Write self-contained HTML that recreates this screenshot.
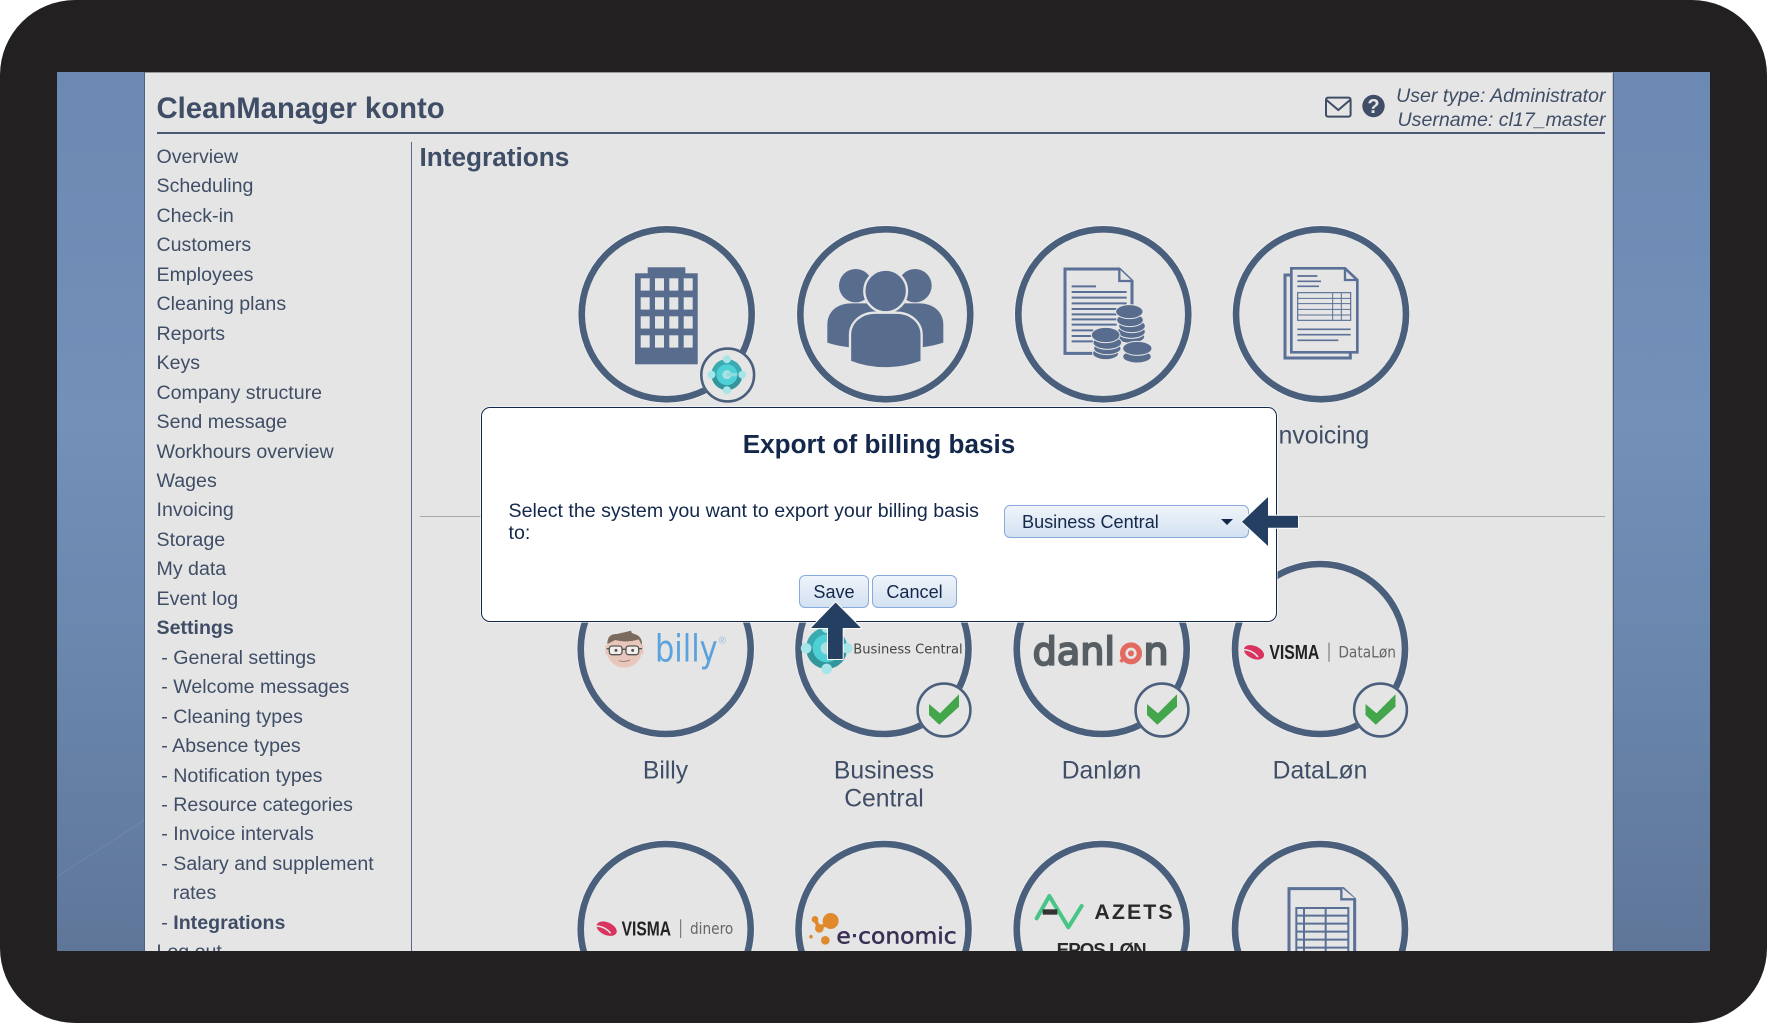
<!DOCTYPE html>
<html lang="en">
<head>
<meta charset="utf-8">
<title>CleanManager konto</title>
<style>
html,body{margin:0;padding:0;width:1767px;height:1023px;overflow:hidden;background:#fff}
body{font-family:"Liberation Sans",Arial,sans-serif;position:relative}
#frame{position:absolute;left:0;top:0;width:1767px;height:1023px;background:#222021;border-radius:75px}
#screen{position:absolute;left:57px;top:72px;width:1653px;height:879px;overflow:hidden;background:linear-gradient(180deg,#6c89b3 0%,#7290b8 40%,#6a87ae 65%,#5f7699 100%)}
#in{position:absolute;left:-57px;top:-72px;width:1767px;height:1023px;filter:blur(.3px)}
#panel{position:absolute;left:144px;top:72px;width:1470px;height:900px;background:#e5e5e5;border-left:1.2px solid #4c6180;border-right:1.2px solid #4c6180;box-sizing:border-box;box-shadow:inset -1px 0 0 #c4c4c4,inset 0 1px 0 #9a9a9a}
.abs{position:absolute;white-space:nowrap}
#title{left:156.5px;top:91.5px;font-size:29.3px;line-height:33px;font-weight:bold;color:#3f4e66}
#rule{left:156.5px;top:132px;width:1448.5px;height:1.6px;background:#4a5a74}
#vr{left:410.8px;top:142px;width:1.6px;height:830px;background:#56698a}
#h2{left:419.5px;top:141.5px;font-size:26.2px;line-height:30px;font-weight:bold;color:#3f4e66}
#user{left:1200px;width:405.5px;top:83.5px;text-align:right;font-size:19.6px;line-height:24.4px;font-style:italic;color:#3f4e66}
#nav{left:156.5px;top:143px;width:250px;font-size:19.6px;line-height:29.45px;color:#3f4e66}
#nav div{white-space:nowrap}
#nav .s{padding-left:4.8px}
#nav .i{padding-left:16.2px}
#nav b{font-weight:bold}
#hr2{left:419.5px;top:516px;width:1185.5px;height:1.4px;background:#a9a9a9}
svg{position:absolute;left:0;top:0;overflow:visible}
#modal{position:absolute;left:481px;top:406.5px;width:796px;height:215.5px;box-sizing:border-box;background:#fff;border:1.6px solid #14284b;border-radius:9px;box-shadow:0 0 0 1px rgba(255,255,255,.55);color:#14284b}
#mt{position:absolute;left:0;right:0;top:21.8px;text-align:center;font-size:26.1px;line-height:30px;font-weight:bold}
#mb{position:absolute;left:26.5px;top:92px;width:480px;font-size:19.6px;line-height:22.4px}
#sel{position:absolute;left:521.5px;top:97px;width:245px;height:33.6px;box-sizing:border-box;border:1.3px solid #86abdc;border-radius:6px;background:linear-gradient(180deg,#eff4fa,#d3e1f1);font-size:18.1px;line-height:33px;padding-left:17.5px}
#car{position:absolute;left:216px;top:13px;width:0;height:0;border-left:6px solid transparent;border-right:6px solid transparent;border-top:6.5px solid #14284b}
.btn{position:absolute;top:167px;height:33.6px;box-sizing:border-box;border:1.3px solid #86abdc;border-radius:6px;background:linear-gradient(180deg,#eff4fa,#d3e1f1);font-size:18.1px;line-height:33px;text-align:center}
</style>
</head>
<body>
<div id="frame">
<div id="screen">
<div id="in">
<svg width="1767" height="1023" viewBox="0 0 1767 1023">
  <line x1="57" y1="877" x2="144" y2="820" stroke="#fff" stroke-opacity=".07" stroke-width="1.2"/>
</svg>
<div id="panel"></div>
<div class="abs" id="title">CleanManager konto</div>
<div class="abs" id="rule"></div>
<div class="abs" id="vr"></div>
<div class="abs" id="h2">Integrations</div>
<div class="abs" id="user">User type: Administrator<br>Username: cl17_master</div>
<div class="abs" id="nav">
<div>Overview</div><div>Scheduling</div><div>Check-in</div><div>Customers</div><div>Employees</div><div>Cleaning plans</div><div>Reports</div><div>Keys</div><div>Company structure</div><div>Send message</div><div>Workhours overview</div><div>Wages</div><div>Invoicing</div><div>Storage</div><div>My data</div><div>Event log</div><div><b>Settings</b></div>
<div class="s">- General settings</div><div class="s">- Welcome messages</div><div class="s">- Cleaning types</div><div class="s">- Absence types</div><div class="s">- Notification types</div><div class="s">- Resource categories</div><div class="s">- Invoice intervals</div><div class="s">- Salary and supplement</div><div class="i">rates</div><div class="s">- <b>Integrations</b></div><div>Log out</div>
</div>
<div class="abs" id="hr2"></div>

<svg width="1767" height="1023" viewBox="0 0 1767 1023">
<defs>
  <g id="ring"><circle r="85" fill="none" stroke="#fff" stroke-opacity=".55" stroke-width="8"/><circle r="85" fill="#e5e5e5" stroke="#4a5f7c" stroke-width="6.6"/></g>
  <g id="chk"><circle r="27.8" fill="#fff" opacity=".6"/><circle r="26.4" fill="#e5e5e5" stroke="#4a5f7c" stroke-width="2.6"/><polygon points="-15,-6 -4,3.3 15,-15.7 15,-3.3 -4.7,14.7 -15,5" fill="#44a64b"/></g>
  <g id="bc">
    <circle r="15.5" fill="#34969d"/>
    <path d="M-15.5 0A15.5 15.5 0 0 1 15.5 0Z" fill="#3aabb0"/>
    <circle r="10.5" fill="#4fcfd6"/>
    <circle r="4.6" fill="#a9e0e2"/>
    <rect x="0" y="-1.6" width="10" height="3.2" fill="#8fdcdf"/>
    <circle cx="0" cy="-15.5" r="4" fill="#a6e6e8"/><circle cx="0" cy="15.5" r="4" fill="#a6e6e8"/><circle cx="-15.5" cy="0" r="4" fill="#a6e6e8"/><circle cx="15.5" cy="0" r="4" fill="#a6e6e8"/>
  </g>
  <g id="swoosh">
    <ellipse rx="32" ry="19" transform="rotate(24)" fill="#d9345f"/>
    <path d="M-30 -8Q-4 -6 12 14" fill="none" stroke="#e5e5e5" stroke-width="4.5"/>
  </g>
</defs>

<!-- row 1 -->
<use href="#ring" x="666.7" y="314.3"/>
<use href="#ring" x="885.3" y="314.3"/>
<use href="#ring" x="1103.3" y="314.3"/>
<use href="#ring" x="1321" y="314.3"/>

<!-- building -->
<g fill="#586c8d">
  <rect x="635" y="273.3" width="62.7" height="91"/>
  <rect x="647.7" y="267.3" width="37.6" height="7"/>
</g>
<g fill="#e5e5e5">
  <rect x="640.7" y="278.3" width="9" height="12.3"/><rect x="655" y="278.3" width="9" height="12.3"/><rect x="669.3" y="278.3" width="9" height="12.3"/><rect x="683.7" y="278.3" width="9" height="12.3"/>
  <rect x="640.7" y="297.3" width="9" height="12.3"/><rect x="655" y="297.3" width="9" height="12.3"/><rect x="669.3" y="297.3" width="9" height="12.3"/><rect x="683.7" y="297.3" width="9" height="12.3"/>
  <rect x="640.7" y="316.3" width="9" height="12.3"/><rect x="655" y="316.3" width="9" height="12.3"/><rect x="669.3" y="316.3" width="9" height="12.3"/><rect x="683.7" y="316.3" width="9" height="12.3"/>
  <rect x="640.7" y="335.3" width="9" height="12.3"/><rect x="655" y="335.3" width="9" height="12.3"/><rect x="669.3" y="335.3" width="9" height="12.3"/><rect x="683.7" y="335.3" width="9" height="12.3"/>
</g>
<circle cx="727.7" cy="375" r="27.8" fill="#fff" opacity=".6"/>
<circle cx="727.7" cy="375" r="26.4" fill="#e5e5e5" stroke="#4a5f7c" stroke-width="2.6"/>
<use href="#bc" x="726.9" y="374.7"/>

<!-- people -->
<g transform="translate(560 220) scale(.33333)">
  <circle cx="887" cy="197" r="50" fill="#586c8d"/>
  <circle cx="1065" cy="197" r="50" fill="#586c8d"/>
  <path d="M802 368V315C802 275 830 250 875 250H1078C1120 250 1150 275 1150 315V368Q1120 378 1085 382H870Q830 378 802 368Z" fill="#586c8d"/>
  <path d="M870 425V345C870 305 905 278 945 278H1010C1050 278 1085 305 1085 345V425Q1030 445 977 445Q920 445 870 425Z" fill="#586c8d" stroke="#e5e5e5" stroke-width="7"/>
  <circle cx="977" cy="213" r="64" fill="#586c8d" stroke="#e5e5e5" stroke-width="7"/>
</g>

<!-- document with coins -->
<g transform="translate(1000 220) scale(.33333)">
  <path d="M280 400H195V147H358L396 183V260" fill="none" stroke="#5a7096" stroke-width="9"/>
  <path d="M358 147V183H396" fill="#e5e5e5" stroke="#5a7096" stroke-width="7"/>
  <g stroke="#5a7096" stroke-width="6" fill="none">
    <path d="M215 199H288M215 216H380M215 233H380M215 250H380M215 267H350M215 283H350M215 298H350M215 314H350M215 331H280M215 348H280M215 364H280"/>
  </g>
  <g fill="#586c8d" stroke="#e5e5e5" stroke-width="3">
    <ellipse cx="392" cy="350" rx="42" ry="20"/><ellipse cx="394" cy="335" rx="42" ry="20"/><ellipse cx="396" cy="318" rx="40" ry="20"/><ellipse cx="390" cy="300" rx="40" ry="20"/>
    <ellipse cx="388" cy="275" rx="41" ry="21"/>
    <ellipse cx="317" cy="400" rx="39" ry="19"/><ellipse cx="322" cy="385" rx="41" ry="19"/><ellipse cx="322" cy="368" rx="43" ry="20"/>
    <ellipse cx="317" cy="345" rx="43" ry="23"/>
    <ellipse cx="411" cy="410" rx="43" ry="19"/><ellipse cx="412" cy="385" rx="44" ry="21"/>
  </g>
</g>

<!-- invoice -->
<g transform="translate(1000 220) scale(.33333)" fill="none" stroke="#5a7096">
  <path d="M870 165H855V414H1051V398" stroke-width="9"/>
  <path d="M874 145H1035L1072 180V397H874Z" stroke-width="8" fill="#e5e5e5"/>
  <path d="M1035 145V180H1072" stroke-width="7"/>
  <path d="M892 168H952M892 184H963M892 199H957" stroke-width="5"/>
  <rect x="893" y="218" width="159" height="83" stroke-width="3.5"/>
  <path d="M893 235H1052M893 251H1052M893 268H1052M893 285H1052M998 218V301M1024 218V301" stroke-width="3"/>
  <path d="M892 328H1052M892 344H1052M892 361H1015" stroke-width="5"/>
</g>

<text x="1320.5" y="443.6" text-anchor="middle" font-size="24.7" fill="#3f4e66" font-family="Liberation Sans">Invoicing</text>

<!-- row 2 -->
<use href="#ring" x="665.7" y="649"/>
<use href="#ring" x="883.5" y="649"/>
<use href="#ring" x="1101.7" y="649"/>
<use href="#ring" x="1320" y="649"/>

<!-- billy -->
<g transform="translate(560 600) scale(.33333)">
  <circle cx="193" cy="150" r="53" fill="#e9c6bb"/>
  <rect x="136" y="135" width="8" height="28" rx="4" fill="#e9c6bb"/><rect x="242" y="135" width="8" height="28" rx="4" fill="#e9c6bb"/>
  <path d="M142 132Q142 100 172 102L214 92Q212 100 224 102Q248 110 246 136L236 118Q200 130 166 120Z" fill="#7b6b5f"/>
  <g fill="#f3efe9" stroke="#555" stroke-width="4"><rect x="148" y="138" width="38" height="26" rx="8"/><rect x="198" y="138" width="38" height="26" rx="8"/></g>
  <path d="M186 148H198M140 146H148M236 146H246" stroke="#555" stroke-width="4"/>
  <circle cx="168" cy="151" r="4.5" fill="#555"/><circle cx="218" cy="151" r="4.5" fill="#555"/>
  <path d="M176 182Q193 188 210 180" fill="none" stroke="#9e7f74" stroke-width="3"/>
  <text x="285" y="185" font-family="DejaVu Sans" font-size="112" fill="#5aa2dd" textLength="188" lengthAdjust="spacingAndGlyphs">billy</text>
  <text x="476" y="130" font-family="Liberation Sans" font-size="30" fill="#8fbfe6">®</text>
</g>

<!-- business central -->
<g transform="translate(826.7 648.3) scale(1.33)"><use href="#bc"/></g>
<text x="853.3" y="653.3" font-family="DejaVu Sans" font-size="13.2" fill="#444" textLength="109.4" lengthAdjust="spacingAndGlyphs">Business Central</text>

<!-- danlon -->
<g transform="translate(1000 600) scale(.33333)">
  <text x="98" y="193" font-family="DejaVu Sans" font-size="115" fill="#575e63" stroke="#575e63" stroke-width="6" textLength="247" lengthAdjust="spacingAndGlyphs">danl</text>
  <circle cx="393" cy="160" r="25" fill="none" stroke="#e26a60" stroke-width="16"/>
  <circle cx="393" cy="160" r="9" fill="#e26a60"/>
  <path d="M362 186L372 172" stroke="#e26a60" stroke-width="10"/>
  <text x="430" y="193" font-family="DejaVu Sans" font-size="115" fill="#575e63" stroke="#575e63" stroke-width="6" textLength="76" lengthAdjust="spacingAndGlyphs">n</text>
</g>

<!-- visma datalon -->
<g transform="translate(1000 600) scale(.33333)">
  <use href="#swoosh" x="762" y="157"/>
  <text x="808" y="177" font-family="Liberation Sans" font-weight="bold" font-size="62" fill="#222" textLength="150" lengthAdjust="spacingAndGlyphs">VISMA</text>
  <path d="M987 128V185" stroke="#666" stroke-width="3"/>
  <text x="1015" y="173" font-family="DejaVu Sans" font-size="48" fill="#666" textLength="173" lengthAdjust="spacingAndGlyphs">DataLøn</text>
</g>

<use href="#chk" x="944" y="710"/>
<use href="#chk" x="1162" y="710"/>
<use href="#chk" x="1380.5" y="710"/>

<g font-family="Liberation Sans" font-size="24.7" fill="#3f4e66" text-anchor="middle">
  <text x="665.5" y="778.3">Billy</text>
  <text x="884" y="778.3">Business</text>
  <text x="884" y="806.5">Central</text>
  <text x="1101.5" y="778.3">Danløn</text>
  <text x="1320" y="778.3">DataLøn</text>
</g>

<!-- row 3 -->
<use href="#ring" x="665.7" y="929"/>
<use href="#ring" x="883.5" y="929"/>
<use href="#ring" x="1101.7" y="929"/>
<use href="#ring" x="1320" y="929"/>

<g transform="translate(560 820) scale(.33333)">
  <use href="#swoosh" x="140" y="326"/>
  <text x="185" y="346" font-family="Liberation Sans" font-weight="bold" font-size="62" fill="#222" textLength="148" lengthAdjust="spacingAndGlyphs">VISMA</text>
  <path d="M362 298V354" stroke="#666" stroke-width="3"/>
  <text x="390" y="342" font-family="DejaVu Sans" font-size="48" fill="#666" textLength="130" lengthAdjust="spacingAndGlyphs">dinero</text>
  <g fill="#e08a2e">
    <circle cx="765" cy="298" r="10"/><circle cx="812" cy="303" r="24"/><circle cx="778" cy="325" r="13"/><circle cx="796" cy="361" r="13"/><circle cx="753" cy="350" r="5.5"/>
    <path d="M765 298L778 325L812 303" fill="none" stroke="#e08a2e" stroke-width="11"/>
  </g>
  <text x="829" y="370" font-family="DejaVu Sans" font-size="66" fill="#3a2f55" stroke="#3a2f55" stroke-width="1.6" textLength="361" lengthAdjust="spacingAndGlyphs">e·conomic</text>
</g>

<g transform="translate(1000 820) scale(.33333)">
  <path d="M110 295L148 228L205 322L245 258" fill="none" stroke="#47c585" stroke-width="12" stroke-linejoin="round" stroke-linecap="round"/>
  <rect x="128" y="268" width="44" height="16" fill="#333"/>
  <text x="283" y="297" font-family="Liberation Sans" font-weight="bold" font-size="64" fill="#2a2a2a" textLength="235">AZETS</text>
  <text x="170" y="408" font-family="Liberation Sans" font-weight="bold" font-size="56" fill="#2a2a2a" textLength="270">EPOS LØN</text>
  <path d="M867 700V206H1030L1064 238V700" fill="none" stroke="#5a7096" stroke-width="9"/>
  <path d="M1024 202V238H1068" fill="#e5e5e5" stroke="#5a7096" stroke-width="7"/>
  <path d="M889 700V264H1045V700M889 287H1045M889 311H1045M889 335H1045M889 359H1045M889 383H1045M889 407H1045M912 264V700M977 264V700" fill="none" stroke="#5a7096" stroke-width="6"/>
</g>
</svg>

<div id="modal">
  <div id="mt">Export of billing basis</div>
  <div id="mb">Select the system you want to export your billing basis to:</div>
  <div id="sel">Business Central<span id="car"></span></div>
  <div class="btn" style="left:317px;width:70px">Save</div>
  <div class="btn" style="left:390px;width:85px">Cancel</div>
</div>

<svg width="1767" height="1023" viewBox="0 0 1767 1023">
  <polygon points="1242,521.7 1268,497 1268,515.7 1298,515.7 1298,527.7 1268,527.7 1268,546" fill="#253f63" stroke="#fff" stroke-width="2" stroke-linejoin="round" paint-order="stroke"/>
  <polygon points="835.6,602.5 861,628 842.7,628 842.7,659 828,659 828,628 811,628" fill="#253f63" stroke="#fff" stroke-width="2" stroke-linejoin="round" paint-order="stroke"/>
</svg>

<!-- header icons -->
<svg width="1767" height="1023" viewBox="0 0 1767 1023">
  <rect x="1326" y="97.6" width="24.6" height="19" rx="2" fill="none" stroke="#3f4e66" stroke-width="2"/>
  <path d="M1326.5 100L1338.3 110L1350 100" fill="none" stroke="#3f4e66" stroke-width="2"/>
  <circle cx="1373.5" cy="106" r="11.2" fill="#3f4e66"/>
  <text x="1373.5" y="113" text-anchor="middle" font-family="Liberation Sans" font-weight="bold" font-size="20" fill="#e5e5e5">?</text>
</svg>
</div>
</div>
</div>
</body>
</html>
